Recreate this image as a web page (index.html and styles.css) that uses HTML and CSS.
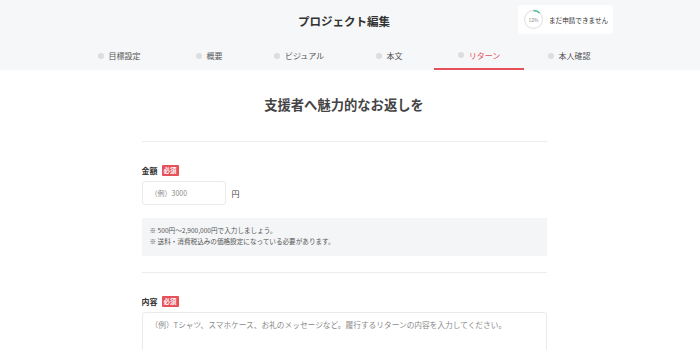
FILE: index.html
```html
<!DOCTYPE html>
<html lang="ja">
<head>
  <meta charset="UTF-8">
  <title>プロジェクト編集</title>
  <link rel="stylesheet" href="styles.css">
</head>
<body>
  <header class="header">
    <div class="header-inner">
      <div class="header-top">
        <h1 class="header-title">プロジェクト編集</h1>
        <div class="progress-badge">
          <div class="progress-ring">
            <svg width="21" height="21" viewBox="0 0 21 21">
              <circle cx="10.5" cy="10.5" r="9" fill="none" stroke="#e6e6e6" stroke-width="1.3"/>
              <circle cx="10.5" cy="10.5" r="9" fill="none" stroke="#3dbd8c" stroke-width="1.3"
                stroke-dasharray="6.8 60" transform="rotate(-90 10.5 10.5)"/>
            </svg>
            <span class="progress-num">12%</span>
          </div>
          <span class="progress-text">まだ申請できません</span>
        </div>
      </div>

      <!-- ステップタブ -->
      <nav class="tabs">
        <a class="tab"><span class="tab-icon"></span>目標設定</a>
        <a class="tab"><span class="tab-icon"></span>概要</a>
        <a class="tab"><span class="tab-icon"></span>ビジュアル</a>
        <a class="tab"><span class="tab-icon"></span>本文</a>
        <a class="tab active"><span class="tab-icon"></span>リターン</a>
        <a class="tab"><span class="tab-icon"></span>本人確認</a>
      </nav>
    </div>
  </header>

  <main class="main">
    <div class="content">
      <h2 class="section-title">支援者へ魅力的なお返しを</h2>

      <!-- 金額 -->
      <div class="field">
        <div class="field-label">金額<span class="required">必須</span></div>
        <div class="price-row">
          <input class="price-input" type="text" placeholder="（例）3000">
          <span class="unit">円</span>
        </div>
        <div class="note">
          <p>※ 500円〜2,900,000円で入力しましょう。</p>
          <p>※ 送料・消費税込みの価格設定になっている必要があります。</p>
        </div>
      </div>

      <!-- 内容 -->
      <div class="field">
        <div class="field-label">内容<span class="required">必須</span></div>
        <textarea class="body-input" placeholder="（例）Tシャツ、スマホケース、お礼のメッセージなど。履行するリターンの内容を入力してください。"></textarea>
      </div>
    </div>
  </main>
</body>
</html>
```

FILE: styles.css
```css
body {
  font-family: 'Noto Sans CJK JP', 'Noto Sans', sans-serif;
  color: #444;
  background: #fff;
  margin: 0;
  padding: 0;
  overflow: hidden;
}

.header {
  background: #f6f7f8;
}

.header-inner {
  width: 540px;
  margin-left: 74px;
}

.header-top {
  position: relative;
  height: 42px;
  display: flex;
  align-items: center;
  justify-content: center;
}

.header-title {
  margin: 0;
  font-size: 11.5px;
  font-weight: 700;
  color: #333;
}

.progress-badge {
  position: absolute;
  top: 5px;
  right: 1px;
  width: 95px;
  height: 29px;
  box-sizing: border-box;
  background: #fff;
  border-radius: 3px;
  display: flex;
  align-items: center;
  padding-left: 5px;
  gap: 5px;
}

.progress-ring {
  position: relative;
  width: 21px;
  height: 21px;
}

.progress-ring svg {
  display: block;
}

.progress-num {
  position: absolute;
  inset: 0;
  display: flex;
  align-items: center;
  justify-content: center;
  font-size: 5px;
  color: #888;
}

.progress-text {
  font-size: 6.6px;
  color: #333;
}

.tabs {
  display: flex;
  height: 28px;
}

.tab {
  flex: 1;
  display: flex;
  align-items: center;
  justify-content: center;
  gap: 5px;
  font-size: 8px;
  color: #555;
  padding-bottom: 1px;
  box-sizing: border-box;
}

.tab-icon {
  width: 6px;
  height: 6px;
  border-radius: 50%;
  background: #dcdddf;
}

.tab.active {
  color: #e5505a;
  border-bottom: 2px solid #e5505a;
  padding-bottom: 0;
}

.main {
  width: 688px;
}

.content {
  width: 405px;
  margin: 0 auto;
}

.section-title {
  margin: 0;
  padding: 25px 0 27px;
  text-align: center;
  font-size: 13.3px;
  font-weight: 700;
  color: #444;
  border-bottom: 1px solid #eceded;
}

.field {
  padding-top: 22px;
  border-bottom: 1px solid #eceded;
  padding-bottom: 16px;
}

.field:last-child {
  border-bottom: none;
}

.field-label {
  display: flex;
  align-items: center;
  font-size: 8px;
  font-weight: 700;
  color: #333;
  height: 12px;
}

.required {
  margin-left: 4px;
  background: #e5505a;
  color: #fff;
  font-size: 6.5px;
  font-weight: 700;
  padding: 1px 2px;
  border-radius: 1px;
  line-height: 9px;
}

.price-row {
  display: flex;
  align-items: center;
  margin-top: 5px;
  gap: 6px;
}

.price-input {
  width: 84px;
  height: 24px;
  box-sizing: border-box;
  border: 1px solid #ebebeb;
  border-radius: 3px;
  padding: 0 8px;
  font-family: inherit;
  font-size: 7px;
  outline: none;
}

.price-input::placeholder,
.body-input::placeholder {
  color: #8a8a8a;
}

.unit {
  font-size: 8px;
  color: #444;
}

.note {
  margin-top: 13px;
  background: #f4f5f7;
  padding: 7px 8px 9px;
  font-size: 6.6px;
  color: #555;
}

.note p {
  margin: 0;
  line-height: 11px;
}

.body-input {
  display: block;
  margin-top: 5px;
  width: 405px;
  height: 60px;
  box-sizing: border-box;
  border: 1px solid #ebebeb;
  border-radius: 3px;
  padding: 6px 8px;
  font-family: inherit;
  font-size: 7.7px;
  resize: none;
  outline: none;
}
```
